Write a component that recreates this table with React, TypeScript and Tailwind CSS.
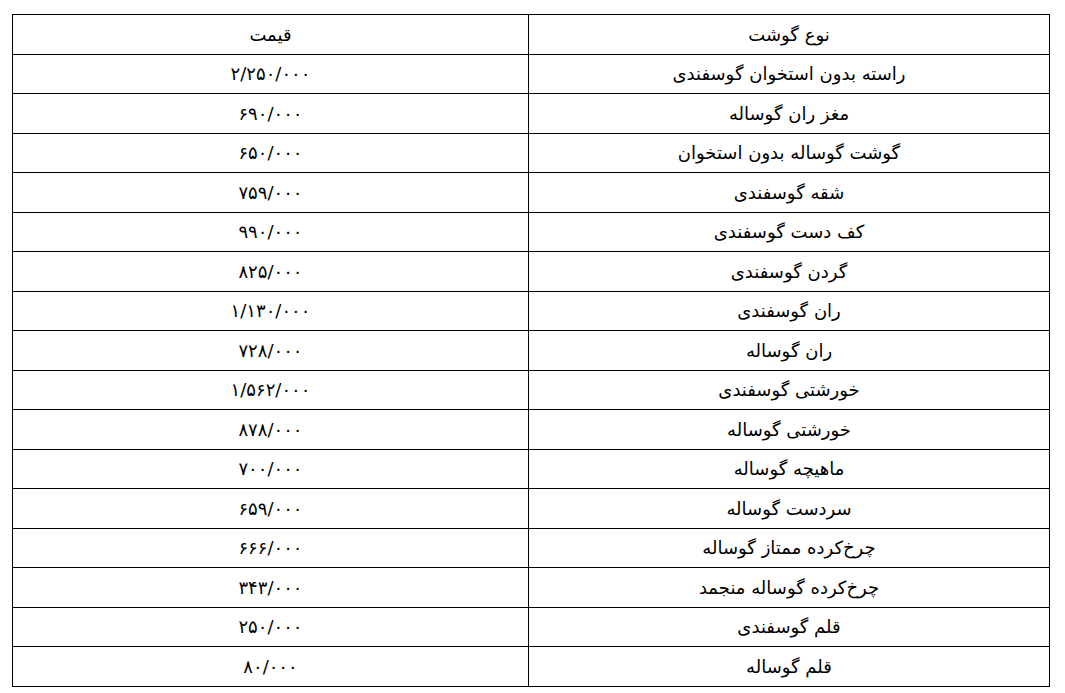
const rows: { name: string; price: string }[] = [
  { name: 'راسته بدون استخوان گوسفندی', price: '۲/۲۵۰/۰۰۰' },
  { name: 'مغز ران گوساله', price: '۶۹۰/۰۰۰' },
  { name: 'گوشت گوساله بدون استخوان', price: '۶۵۰/۰۰۰' },
  { name: 'شقه گوسفندی', price: '۷۵۹/۰۰۰' },
  { name: 'کف دست گوسفندی', price: '۹۹۰/۰۰۰' },
  { name: 'گردن گوسفندی', price: '۸۲۵/۰۰۰' },
  { name: 'ران گوسفندی', price: '۱/۱۳۰/۰۰۰' },
  { name: 'ران گوساله', price: '۷۲۸/۰۰۰' },
  { name: 'خورشتی گوسفندی', price: '۱/۵۶۲/۰۰۰' },
  { name: 'خورشتی گوساله', price: '۸۷۸/۰۰۰' },
  { name: 'ماهیچه گوساله', price: '۷۰۰/۰۰۰' },
  { name: 'سردست گوساله', price: '۶۵۹/۰۰۰' },
  { name: 'چرخ‌کرده ممتاز گوساله', price: '۶۶۶/۰۰۰' },
  { name: 'چرخ‌کرده گوساله منجمد', price: '۳۴۳/۰۰۰' },
  { name: 'قلم گوسفندی', price: '۲۵۰/۰۰۰' },
  { name: 'قلم گوساله', price: '۸۰/۰۰۰' },
];

export default function App() {
  return (
    <div className="bg-white w-[1065px] h-[693px] pl-[12px] pt-[14px]">
      <table
        dir="rtl"
        className="w-[1038px] border-collapse text-[18px] text-black font-['DejaVu_Sans',sans-serif]"
      >
        <thead>
          <tr className="h-[39.5px]">
            <th className="w-[521px] border border-black font-normal text-center">نوع گوشت</th>
            <th className="border border-black font-normal text-center">قیمت</th>
          </tr>
        </thead>
        <tbody>
          {rows.map((r) => (
            <tr key={r.name} className="h-[39.5px]">
              <td className="border border-black text-center">{r.name}</td>
              <td className="border border-black text-center">{r.price}</td>
            </tr>
          ))}
        </tbody>
      </table>
    </div>
  );
}
